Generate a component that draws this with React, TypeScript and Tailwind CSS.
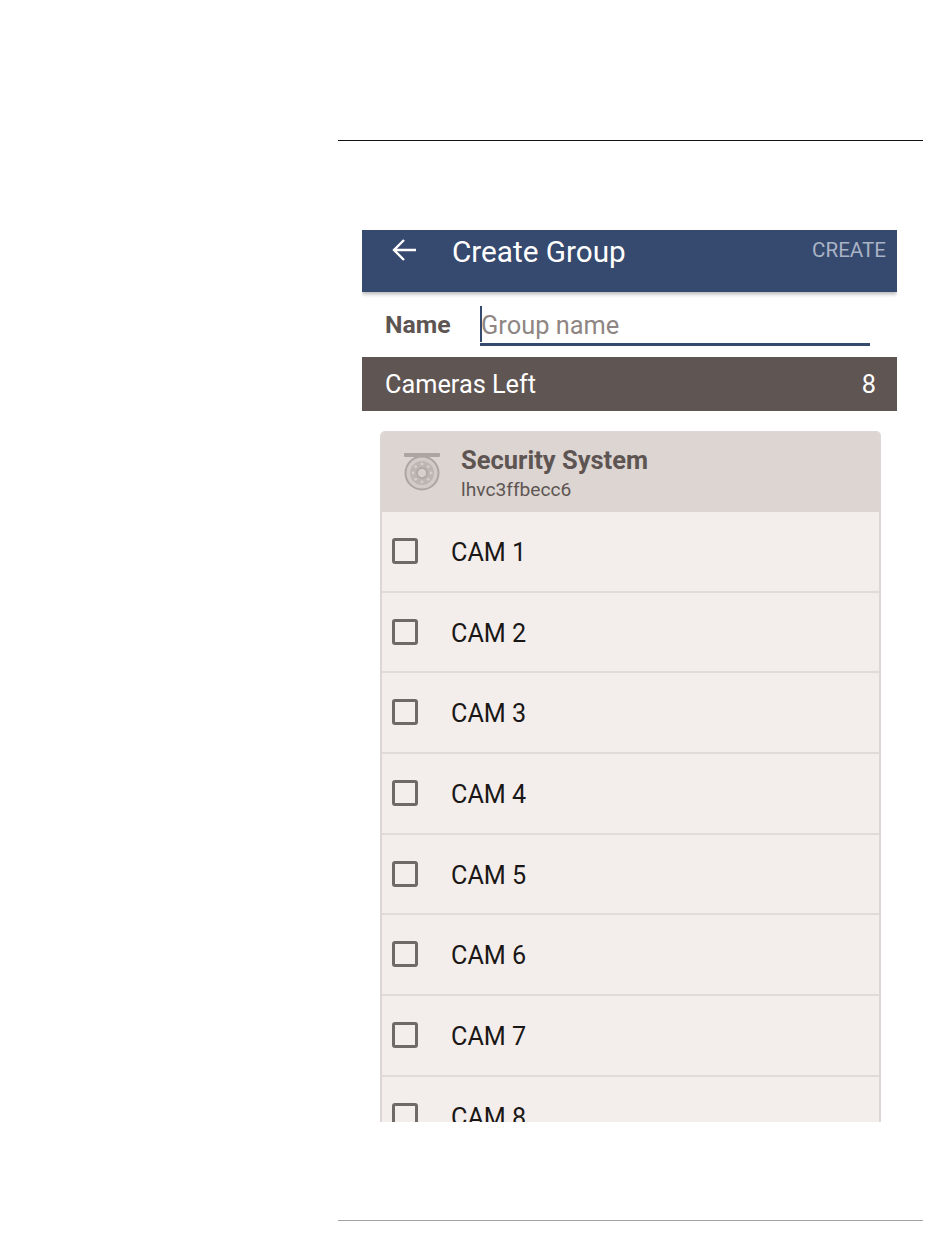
const cams = ["CAM 1", "CAM 2", "CAM 3", "CAM 4", "CAM 5", "CAM 6", "CAM 7", "CAM 8"];

function CameraIcon() {
  const dots = [0, 45, 90, 135, 180, 225, 270, 315];
  return (
    <svg width="38" height="40" viewBox="0 0 38 40" className="shrink-0 mt-[20px]">
      <rect x="1" y="1" width="36" height="4" rx="1" fill="#aca5a3" />
      <circle cx="19" cy="21" r="16.5" fill="#d2cbc8" stroke="#aca5a3" strokeWidth="2" />
      <circle cx="19" cy="21" r="12" fill="#bdb6b3" />
      <circle cx="19" cy="21" r="5" fill="#d6cfcc" stroke="#aca5a3" strokeWidth="1.5" />
      {dots.map((a) => (
        <circle
          key={a}
          cx={19 + 9 * Math.cos((a * Math.PI) / 180)}
          cy={21 + 9 * Math.sin((a * Math.PI) / 180)}
          r="1.4"
          fill="#d6cfcc"
        />
      ))}
    </svg>
  );
}

export default function App() {
  return (
    <div className="w-[950px] h-[1248px] bg-white pl-[338px] pr-[27px] pt-[140px] font-['Roboto',sans-serif] overflow-hidden">
      <div className="h-px bg-[#111111]" />
      <div className="mt-[89px] mx-[24px] w-[535px] h-[892px] overflow-hidden flex flex-col">
        <div className="h-[62px] shrink-0 bg-[#36496e] shadow-[0_2px_4px_rgba(0,0,0,0.3)] flex items-start pl-[29px] pr-[11px] relative z-10">
          <svg width="26" height="24" viewBox="0 0 26 24" fill="none" stroke="#ffffff" strokeWidth="2.4" className="mt-[8px] shrink-0">
            <path d="M25 12H3M13 2 3 12l10 10" />
          </svg>
          <span className="ml-[35px] mt-[4px] text-[29.7px] leading-[36px] text-white">Create Group</span>
          <span className="ml-auto mt-[7px] text-[20.6px] leading-[26px] text-[#a9b3c6]">CREATE</span>
        </div>
        <div className="h-[65px] shrink-0 flex items-start pl-[23px] pr-[27px] bg-white">
          <span className="mt-[18px] w-[95px] text-[24.8px] leading-[30px] font-bold text-[#5e5553]">Name</span>
          <div className="flex-1 mt-[14px] h-[40px] border-b-[3px] border-[#36496e] flex">
            <div className="w-[2px] h-[36px] bg-[#36496e] shrink-0" />
            <span className="-ml-px mt-[4px] text-[25.4px] leading-[30px] text-[#8f8684]">Group name</span>
          </div>
        </div>
        <div className="h-[54px] shrink-0 bg-[#5f5553] flex items-center justify-between pl-[23px] pr-[21px] text-white text-[25.3px]">
          <span className="mt-[1px]">Cameras Left</span>
          <span className="mt-[1px]">8</span>
        </div>
        <div className="mt-[20px] mx-[18px] w-[501px] flex-1 rounded-t-[5px] overflow-hidden border-x-2 border-t border-[#dcd7d5] bg-[#f3eeec]">
          <div className="h-[80px] bg-[#dcd5d2] flex items-start pl-[21px]">
            <CameraIcon />
            <div className="ml-[20px] mt-[13px] flex flex-col">
              <span className="text-[25.5px] leading-[30px] font-bold text-[#5e5553]">Security System</span>
              <span className="text-[19.2px] leading-[22px] mt-[4px] text-[#5e5553]">lhvc3ffbecc6</span>
            </div>
          </div>
          {cams.map((c) => (
            <div key={c} className="h-[80.7px] border-b-2 border-[#e0dbd9] flex items-start pl-[10px]">
              <div className="mt-[26px] w-[26px] h-[26px] rounded-[3px] border-[3px] border-[#6f6967]" />
              <span className="ml-[33px] mt-[26px] text-[25.2px] leading-[30px] text-[#1a1716]">{c}</span>
            </div>
          ))}
        </div>
      </div>
      <div className="mt-[98px] h-px bg-[#a3a3a3]" />
    </div>
  );
}
